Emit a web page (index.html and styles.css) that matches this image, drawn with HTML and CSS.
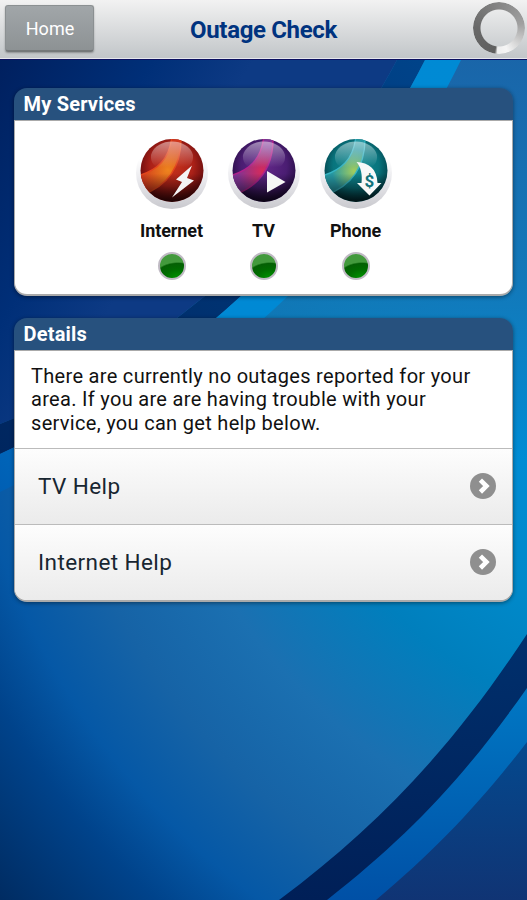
FILE: index.html
```html
<!DOCTYPE html>
<html lang="en">
<head>
    <meta charset="UTF-8">
    <meta name="viewport" content="width=device-width, initial-scale=1.0">
    <title>Outage Check</title>
    <link rel="stylesheet" href="styles.css">
</head>
<body>
    <svg class="backdrop" viewBox="0 0 527 900" preserveAspectRatio="none">
        <defs>
            <linearGradient id="sky" gradientUnits="userSpaceOnUse" x1="0" y1="60" x2="190" y2="170">
                <stop offset="0" stop-color="#00205f"/>
                <stop offset=".6" stop-color="#002f78"/>
                <stop offset="1" stop-color="#0d3a84"/>
            </linearGradient>
            <radialGradient id="glow" gradientUnits="userSpaceOnUse" cx="700" cy="300" r="930">
                <stop offset=".25" stop-color="#008cd4"/>
                <stop offset=".37" stop-color="#0089c9"/>
                <stop offset=".47" stop-color="#007fbd"/>
                <stop offset=".6" stop-color="#1b70b1"/>
                <stop offset=".71" stop-color="#1663a6"/>
                <stop offset=".8" stop-color="#0558a6"/>
                <stop offset=".87" stop-color="#00438b"/>
                <stop offset="1" stop-color="#002a5f"/>
            </radialGradient>
            <linearGradient id="topTint" x1="0" y1="0" x2="0" y2="1">
                <stop offset=".1" stop-color="#1a64a8"/>
                <stop offset=".6" stop-color="#1873b2" stop-opacity=".8"/>
                <stop offset="1" stop-color="#1873b2" stop-opacity="0"/>
            </linearGradient>
            <linearGradient id="band" x1="1" y1="0" x2="0" y2="1">
                <stop offset="0" stop-color="#008ad4"/>
                <stop offset=".6" stop-color="#0089d4"/>
                <stop offset="1" stop-color="#005fb4"/>
            </linearGradient>
            <linearGradient id="shade" x1="1" y1="0" x2="0" y2="1">
                <stop offset="0" stop-color="#00458c"/>
                <stop offset=".5" stop-color="#003474"/>
                <stop offset="1" stop-color="#00265f"/>
            </linearGradient>
            <linearGradient id="lowDark" x1="0" y1="0" x2="0" y2="1">
                <stop offset="0" stop-color="#00306d"/>
                <stop offset="1" stop-color="#001f57"/>
            </linearGradient>
            <linearGradient id="lowBand" x1="0" y1="0" x2="0" y2="1">
                <stop offset="0" stop-color="#0078c4"/>
                <stop offset="1" stop-color="#0050a6"/>
            </linearGradient>
            <linearGradient id="lowNavy" x1="0" y1="0" x2="0" y2="1">
                <stop offset="0" stop-color="#04498e"/>
                <stop offset="1" stop-color="#103474"/>
            </linearGradient>
        </defs>
        <rect width="527" height="900" fill="url(#glow)"/>
        <rect width="527" height="460" fill="url(#topTint)"/>
        <path fill="url(#sky)" d="M0 0H428L397 60C350 148 285 232 205 296C150 340 75 395 0 424Z"/>
        <path fill="url(#shade)" d="M412 30L397 60C350 148 285 232 205 296C150 340 75 395 0 424V454C90 412 155 374 241 296C325 222 380 148 425 60L440 30Z"/>
        <path fill="url(#band)" d="M440 30L425 60C380 148 325 222 241 296C155 374 90 412 0 454V492C110 440 205 376 288 296C365 222 418 148 461 60L476 30Z"/>
        <path fill="url(#lowDark)" d="M527 634C455 744 380 825 279 900H527Z"/>
        <path fill="url(#lowBand)" d="M527 688C465 776 410 835 327 900H527Z"/>
        <path fill="url(#lowNavy)" d="M527 742C480 803 436 850 376 900H527Z"/>
    </svg>

    <div class="header">
        <a class="homeBtn">Home</a>
        <h1>Outage Check</h1>
        <div class="spinner"></div>
    </div>

    <div class="panel services">
        <h2>My Services</h2>
        <div class="panelBody serviceList">
            <div class="service">
                <svg class="orb" viewBox="0 0 76 76">
                    <defs>
                        <linearGradient id="ring" x1="0" y1="0" x2="0" y2="1">
                            <stop offset=".3" stop-color="#fff"/>
                            <stop offset=".6" stop-color="#e9e9ed"/>
                            <stop offset="1" stop-color="#c9c9ce"/>
                        </linearGradient>
                        <linearGradient id="gloss" x1="0" y1="0" x2="0" y2="1">
                            <stop offset="0" stop-color="#fff" stop-opacity=".48"/>
                            <stop offset=".9" stop-color="#fff" stop-opacity="0"/>
                        </linearGradient>
                        <linearGradient id="rim" x1="0" y1="0" x2="0" y2="1">
                            <stop offset=".55" stop-color="#000" stop-opacity="0"/>
                            <stop offset="1" stop-color="#000" stop-opacity=".7"/>
                        </linearGradient>
                        <radialGradient id="red" cx=".5" cy=".42" r=".56">
                            <stop offset="0" stop-color="#c7331c"/>
                            <stop offset=".6" stop-color="#ab2118"/>
                            <stop offset="1" stop-color="#620a0c"/>
                        </radialGradient>
                        <radialGradient id="redBeam" gradientUnits="userSpaceOnUse" cx="34" cy="35" r="28">
                            <stop offset="0" stop-color="#ee851e"/>
                            <stop offset="1" stop-color="#cf371c"/>
                        </radialGradient>
                        <clipPath id="ball"><circle cx="38" cy="35.5" r="31.5"/></clipPath>
                    </defs>
                    <circle cx="38" cy="38" r="36" fill="url(#ring)"/>
                    <circle cx="38" cy="35.5" r="31.5" fill="url(#red)"/>
                    <g clip-path="url(#ball)">
                        <path d="M0 42C24 36 36 24 38 0H47C48 30 36 50 8 60L0 60Z" fill="url(#redBeam)"/>
                        <path d="M0 42C24 36 36 24 38 0M47 0C48 30 36 50 8 60" fill="none" stroke="#e2451c" stroke-width="1.4"/>
                        <circle cx="38" cy="35.5" r="31.5" fill="url(#rim)"/>
                    </g>
                    <path d="M17 20C22 2 54 2 59 20C60 32 50 35 38 35C26 35 16 32 17 20Z" fill="url(#gloss)"/>
                    <path d="M58 30.5L42 44.500L48 47L38 62.500L60 45.500L53 43Z" fill="#f4f4f4"/>
                </svg>
                <span>Internet</span>
                <i class="light"></i>
            </div>
            <div class="service">
                <svg class="orb" viewBox="0 0 76 76">
                    <defs>
                        <radialGradient id="purple" cx=".5" cy=".42" r=".56">
                            <stop offset="0" stop-color="#64288a"/>
                            <stop offset=".65" stop-color="#4a1d72"/>
                            <stop offset="1" stop-color="#260c43"/>
                        </radialGradient>
                        <radialGradient id="purpleBeam" gradientUnits="userSpaceOnUse" cx="36" cy="36" r="25">
                            <stop offset="0" stop-color="#d62b5b"/>
                            <stop offset="1" stop-color="#7f3494"/>
                        </radialGradient>
                    </defs>
                    <circle cx="38" cy="38" r="36" fill="url(#ring)"/>
                    <circle cx="38" cy="35.5" r="31.5" fill="url(#purple)"/>
                    <g clip-path="url(#ball)">
                        <path d="M0 42C24 36 36 24 38 0H47C48 30 36 50 8 60L0 60Z" fill="url(#purpleBeam)"/>
                        <path d="M0 42C24 36 36 24 38 0M47 0C48 30 36 50 8 60" fill="none" stroke="#b0228c" stroke-width="1.5"/>
                        <circle cx="38" cy="35.5" r="31.5" fill="url(#rim)"/>
                    </g>
                    <path d="M17 20C22 2 54 2 59 20C60 32 50 35 38 35C26 35 16 32 17 20Z" fill="url(#gloss)"/>
                    <path d="M41 36V57.500L59.500 47Z" fill="#f6f6f6"/>
                </svg>
                <span>TV</span>
                <i class="light"></i>
            </div>
            <div class="service">
                <svg class="orb" viewBox="0 0 76 76">
                    <defs>
                        <radialGradient id="teal" cx=".5" cy=".42" r=".56">
                            <stop offset="0" stop-color="#128b94"/>
                            <stop offset=".65" stop-color="#08747d"/>
                            <stop offset="1" stop-color="#033e47"/>
                        </radialGradient>
                        <radialGradient id="tealBeam" gradientUnits="userSpaceOnUse" cx="36" cy="36" r="22">
                            <stop offset="0" stop-color="#a3cd5e"/>
                            <stop offset="1" stop-color="#2697a2"/>
                        </radialGradient>
                    </defs>
                    <circle cx="38" cy="38" r="36" fill="url(#ring)"/>
                    <circle cx="38" cy="35.5" r="31.5" fill="url(#teal)"/>
                    <g clip-path="url(#ball)">
                        <path d="M0 42C24 36 36 24 38 0H47C48 30 36 50 8 60L0 60Z" fill="url(#tealBeam)"/>
                        <path d="M0 42C24 36 36 24 38 0M47 0C48 30 36 50 8 60" fill="none" stroke="#36b3c2" stroke-width="1.3"/>
                        <circle cx="38" cy="35.5" r="31.5" fill="url(#rim)"/>
                    </g>
                    <path d="M17 20C22 2 54 2 59 20C60 32 50 35 38 35C26 35 16 32 17 20Z" fill="url(#gloss)"/>
                    <path d="M38.500 27C51 27.500 59 34 59.500 48H63.500L51.500 60.500L39 48H43.500C44.500 40 43 32 38.500 27Z" fill="#f8f8f8"/>
                    <text class="dollar" x="51.5" y="52" text-anchor="middle">$</text>
                </svg>
                <span>Phone</span>
                <i class="light"></i>
            </div>
        </div>
    </div>

    <div class="panel details">
        <h2>Details</h2>
        <div class="panelBody">
            <p>There are currently no outages reported for your<br>area. If you are are having trouble with your<br>service, you can get help below.</p>
            <a class="helpRow">
                <span>TV Help</span>
                <svg viewBox="0 0 26 26"><circle cx="13" cy="13" r="13"/><path d="M10.4 7.2L16.4 13.1L10.4 19"/></svg>
            </a>
            <a class="helpRow">
                <span>Internet Help</span>
                <svg viewBox="0 0 26 26"><circle cx="13" cy="13" r="13"/><path d="M10.4 7.2L16.4 13.1L10.4 19"/></svg>
            </a>
        </div>
    </div>
</body>
</html>
```
FILE: styles.css
```css
*{
    box-sizing: border-box;
}
body{
    margin: 0;
    height: 900px;
    overflow: hidden;
    background: #00205f;
    font-family: Roboto, "Liberation Sans", sans-serif;
    color: #111;
}
h1, h2, p{
    margin: 0;
}
.backdrop{
    position: absolute;
    top: 0;
    left: 0;
    width: 100%;
    height: 900px;
    z-index: -1;
}

.header{
    display: grid;
    grid-template-columns: 100px 1fr 100px;
    align-items: center;
    height: 60px;
    border-bottom: 1px solid #0b1060;
    background: linear-gradient(#f2f2f2, #c1c5c8);
    box-shadow: inset 0 -1px #e6e7ec;
}
.header h1{
    text-align: center;
    font-size: 24px;
    line-height: 28px;
    letter-spacing: -.35px;
    color: #00337f;
}
.homeBtn{
    width: 89px;
    height: 47px;
    margin: -3px 0 0 5px;
    border: 1px solid #8b9092;
    border-bottom: 2px solid #74787a;
    border-radius: 3px;
    background: linear-gradient(#a1a6a9, #8d9294);
    box-shadow: 0 1px 2px rgba(0,0,0,.3);
    color: #fff;
    font-size: 18px;
    line-height: 45px;
    text-align: center;
    text-indent: 1px;
}
.spinner{
    justify-self: end;
    width: 52px;
    height: 52px;
    margin: -4px 2px 0 0;
    border-radius: 50%;
    background: conic-gradient(#858585, #a0a0a0 80deg, #c4c4c4 115deg, #f5f5f5 160deg, #eee 184deg, #5f5f5f 190deg, #686868 270deg, #858585);
    -webkit-mask: radial-gradient(circle, transparent 18px, #000 19px);
    mask: radial-gradient(circle, transparent 18px, #000 19px);
}

.panel{
    display: flex;
    flex-direction: column;
    margin: 0 14px;
    border-radius: 13px;
    box-shadow: 0 1px 4px rgba(0,0,0,.45);
}
.panel h2{
    height: 32px;
    padding-left: 9.5px;
    border-radius: 13px 13px 0 0;
    background: #27517e;
    color: #fff;
    font-size: 20px;
    line-height: 32px;
    letter-spacing: .2px;
}
.panelBody{
    flex: 1;
    overflow: hidden;
    border: 1px solid #aaa;
    border-bottom-width: 2px;
    border-radius: 0 0 13px 13px;
    background: #fff;
}
.services{
    height: 208px;
    margin-top: 28px;
}
.serviceList{
    display: flex;
    justify-content: center;
    padding-top: 14px;
}
.service{
    display: flex;
    flex-direction: column;
    align-items: center;
    width: 92px;
    font-size: 18px;
    font-weight: bold;
}
.orb{
    width: 76px;
    height: 76px;
}
.service span{
    margin-top: 9px;
    line-height: 22px;
    letter-spacing: -.1px;
}
.dollar{
    font-size: 17px;
    font-weight: bold;
    fill: #11727b;
}
.light{
    width: 28px;
    height: 28px;
    margin-top: 10px;
    border: 2px solid #c0bac4;
    border-radius: 50%;
    background: radial-gradient(ellipse 25px 16px at 75% 100%, #009400, #006c00 55%, #045f04 91%, #439a3d 100%);
}

.details{
    height: 284px;
    margin-top: 22px;
}
.details p{
    height: 97px;
    padding: 14px 16px 0;
    font-size: 20px;
    line-height: 23.4px;
    letter-spacing: .31px;
}
.helpRow{
    display: flex;
    align-items: center;
    justify-content: space-between;
    height: 76px;
    padding: 0 16px 0 23px;
    border-top: 1px solid #bbb;
    background: linear-gradient(#fdfdfd, #ebebeb);
    color: #182631;
    font-size: 22.5px;
    letter-spacing: .42px;
}
.helpRow span{
    margin-top: -2px;
}
.helpRow svg{
    width: 26px;
    height: 26px;
    margin-top: -1px;
}
.helpRow circle{
    fill: #8f8f8f;
}
.helpRow path{
    fill: none;
    stroke: #fff;
    stroke-width: 4.6;
}
```
